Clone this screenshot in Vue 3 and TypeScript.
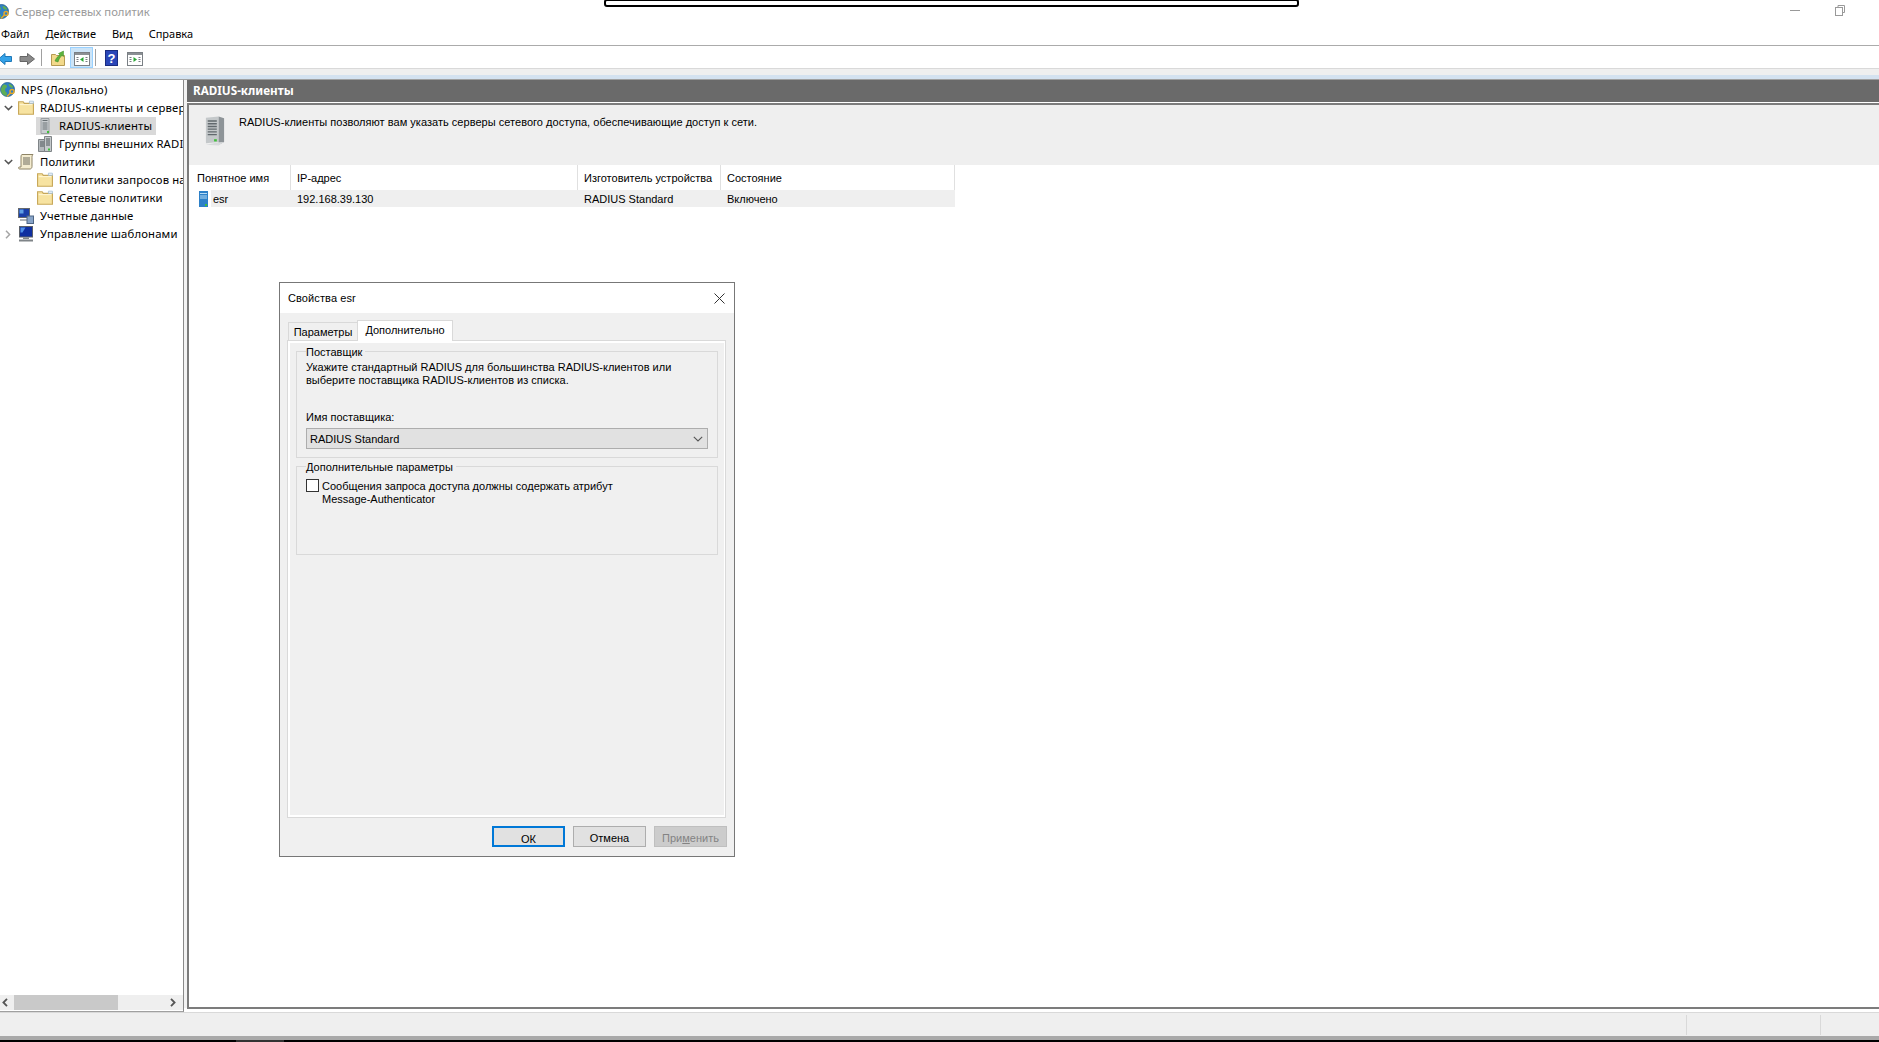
<script setup lang="ts">
interface TreeRow { label: string; icon: string; level: number; chevron?: 'down' | 'right'; selected?: boolean }
const menus: string[] = ['Файл', 'Действие', 'Вид', 'Справка']
const tree: TreeRow[] = [
  { label: 'NPS (Локально)', icon: 'globe', level: 0 },
  { label: 'RADIUS-клиенты и серверы', icon: 'folder', level: 1, chevron: 'down' },
  { label: 'RADIUS-клиенты', icon: 'server', level: 2, selected: true },
  { label: 'Группы внешних RADIUS-серверов', icon: 'servers', level: 2 },
  { label: 'Политики', icon: 'scroll', level: 1, chevron: 'down' },
  { label: 'Политики запросов на подключение', icon: 'folder', level: 2 },
  { label: 'Сетевые политики', icon: 'folder', level: 2 },
  { label: 'Учетные данные', icon: 'accounts', level: 1 },
  { label: 'Управление шаблонами', icon: 'monitor', level: 1, chevron: 'right' }
]
const columns = [
  { title: 'Понятное имя', width: 95 },
  { title: 'IP-адрес', width: 287 },
  { title: 'Изготовитель устройства', width: 143 },
  { title: 'Состояние', width: 234 }
]
</script>

<template>
  <div class="screen">
    <svg class="defs" width="0" height="0">
      <symbol id="globe" viewBox="0 0 16 16">
        <circle cx="7.5" cy="7.5" r="7" fill="#2f7fc4" stroke="#1f5b8e" stroke-width=".8" />
        <path d="M3 3c2-1 4 0 4 1.500S5 6 5 8s2 2 2 4-2 2-3 1.300C2 12 1 10 1 8s1-4 2-5zM9 2c2 0 4 2 4 3s-2 1-3 0-2-3-1-3z" fill="#5eae55" />
        <circle cx="12" cy="9.500" r="2" fill="none" stroke="#e3a92c" stroke-width="1.500" />
        <path d="M10.500 11 7 14.500" stroke="#e3a92c" stroke-width="1.600" />
      </symbol>
      <symbol id="folder" viewBox="0 0 14 14">
        <path d="M.5 1.500h4l1 1.500h8v9.500H.5z" fill="#f7e3a1" stroke="#c8a85a" />
        <path d="M1.500 4h11" stroke="#fff4cf" />
        <path d="M10 1h3.500v2H10z" fill="#e8f0f8" stroke="#9cb8d0" stroke-width=".6" />
      </symbol>
      <symbol id="server" viewBox="0 0 16 16">
        <path d="M4 .5h8v15H4z" fill="#c9cdd0" stroke="#9a9fa2" />
        <path d="M5.500 2.500h5M5.500 5h5M5.500 7h5M5.500 9h5M5.500 11h5" stroke="#687074" />
        <rect x="10" y="13" width="2" height="2" fill="#3fc03a" />
      </symbol>
      <symbol id="servers" viewBox="0 0 16 16">
        <path d="M1.500 3.500h6.500v12H1.500z" fill="#b5babd" stroke="#7f8487" />
        <path d="M7.500 .5h7v15h-7z" fill="#c6cacc" stroke="#7f8487" />
        <path d="M3 6h4M3 8h4M3 10h4M9 3h4M9 5h4M9 7h4M9 9h4" stroke="#50585c" />
        <rect x="11" y="12.500" width="2" height="2" fill="#3fc03a" />
      </symbol>
      <symbol id="scroll" viewBox="0 0 16 16">
        <path d="M4 .5h11c-1 1-1 2-1 3v9c0 1.500-1 2.500-2 2.500H1.500c-1 0-1.500-2 0-2H3V3C3 1.500 3.500 .5 4 .5z" fill="#f4ecd0" stroke="#8e8466" />
        <path d="M5 4h7M5 6h7M5 8h7M5 10h7" stroke="#6d6a5e" />
      </symbol>
      <symbol id="accounts" viewBox="0 0 16 16">
        <rect x=".5" y=".5" width="11" height="9" fill="#1a3fa8" stroke="#65696e" />
        <path d="M1.500 1.500h4v4h-4z" fill="#5fa0e6" />
        <path d="M2 11h7v2H2z" fill="#b0b4b8" />
        <rect x="9" y="8" width="6.500" height="7.500" fill="#88a4c8" stroke="#4f6684" />
      </symbol>
      <symbol id="monitor" viewBox="0 0 16 16">
        <rect x="1.500" y=".5" width="13" height="10.500" fill="#0f2fa0" stroke="#5b6068" />
        <path d="M2.500 1.500h5l-3 5h-2z" fill="#4f8fe8" />
        <path d="M5 11.500h6v1.500H5zM1 13.500h14v2H1z" fill="#7f8488" />
      </symbol>
    </svg>

    <div class="titlebar">
      <svg class="title-icon" width="16" height="16"><use href="#globe" /></svg>
      <span class="title-text">Сервер сетевых политик</span>
      <span class="win-min"></span>
      <svg class="win-restore" width="10" height="11" viewBox="0 0 10 11">
        <path d="M3 2.500V.5h6.500v7H7.500" fill="none" stroke="#999" />
        <rect x=".5" y="2.500" width="7" height="8" fill="#fff" stroke="#999" />
      </svg>
    </div>
    <div class="overlay-bar"></div>

    <nav class="menubar">
      <span v-for="m in menus" :key="m" class="menu-item">{{ m }}</span>
    </nav>

    <div class="toolbar">
      <svg class="tool back" width="14" height="14" viewBox="0 0 14 14"><path d="M7 1.500 .5 7 7 12.500V9.500h6.500v-5H7z" fill="#34a2e8" stroke="#1f78b8" /></svg>
      <svg class="tool fwd" width="16" height="14" viewBox="0 0 16 14"><path d="M8.500 1.500 15.500 7l-7 5.500V9.500H1v-5h7.500z" fill="#8a8a8a" stroke="#666" /></svg>
      <span class="tool-sep"></span>
      <svg class="tool up" width="15" height="16" viewBox="0 0 15 16"><path d="M.5 4.500h4l1 1h8v10H.5z" fill="#f2d98b" stroke="#b59a52" /><path d="M4 11c1-3 3-5 5-6L7.500 3.500l5-2.500 0 5.500L11 5.500C9 7 8 9 7 12z" fill="#5cb23c" stroke="#3b8a24" stroke-width=".5" /></svg>
      <span class="tool-active">
        <svg width="16" height="14" viewBox="0 0 16 14"><rect x=".5" y=".5" width="15" height="13" fill="#fff" stroke="#7a7f84" /><path d="M1 1h14v2H1z" fill="#8b9094" /><path d="M2.500 5.500h2M2.500 7.500h2M2.500 9.500h2M11.500 5.500h2M11.500 7.500h2M11.500 9.500h2" stroke="#7a7f84" /><path d="M9.500 5v5L6 7.500z" fill="#2aa836" /></svg>
      </span>
      <span class="tool-sep second"></span>
      <svg class="tool help" width="13" height="16" viewBox="0 0 13 16"><rect x=".5" y=".5" width="12" height="15" fill="#2a46b8" stroke="#1a2c80" /><text x="6.500" y="13" text-anchor="middle" font-size="13" font-weight="700" font-family="Liberation Sans" fill="#fff">?</text></svg>
      <svg class="tool action" width="16" height="14" viewBox="0 0 16 14"><rect x=".5" y=".5" width="15" height="13" fill="#fff" stroke="#7a7f84" /><path d="M1 1h14v2H1z" fill="#8b9094" /><path d="M2.500 5.500h2M2.500 7.500h2M2.500 9.500h2M11.500 5.500h2M11.500 7.500h2M11.500 9.500h2" stroke="#7a7f84" /><path d="M6.500 5v5L10 7.500z" fill="#2aa836" /></svg>
    </div>
    <div class="band-grey"></div>
    <div class="band-blue"></div>

    <div class="main">
      <aside class="tree-pane">
        <div class="tree-list">
          <div v-for="row in tree" :key="row.label" class="tree-row" :class="'lv' + row.level">
            <span class="chev">
              <svg v-if="row.chevron === 'down'" width="9" height="6" viewBox="0 0 9 6"><path d="M.8 1 4.500 4.600 8.200 1" fill="none" stroke="#555" stroke-width="1.500" /></svg>
              <svg v-else-if="row.chevron === 'right'" width="6" height="9" viewBox="0 0 6 9"><path d="M1 .8 4.600 4.500 1 8.200" fill="none" stroke="#a6a6a6" stroke-width="1.500" /></svg>
            </span>
            <span class="tree-item" :class="{ selected: row.selected }">
              <svg class="tree-icon" width="16" height="16"><use :href="'#' + row.icon" /></svg>
              <span class="tree-label">{{ row.label }}</span>
            </span>
          </div>
        </div>
        <div class="hscroll">
          <svg class="arrow" width="6" height="9" viewBox="0 0 6 9"><path d="M5 .8 1.400 4.500 5 8.200" fill="none" stroke="#555" stroke-width="1.800" /></svg>
          <span class="thumb"></span>
          <svg class="arrow right" width="6" height="9" viewBox="0 0 6 9"><path d="M1 .8 4.600 4.500 1 8.200" fill="none" stroke="#555" stroke-width="1.800" /></svg>
        </div>
      </aside>

      <section class="content">
        <header class="content-head">RADIUS-клиенты</header>
        <div class="content-body">
          <div class="intro">
            <svg class="intro-icon" width="20" height="32" viewBox="0 0 22 32">
              <path d="M1 1.500 15 0v28l-14 1.500z" fill="#c4c8ca" />
              <path d="M15 0l6 2v26l-6 3z" fill="#8e9498" />
              <path d="M1 31l14-2.500 6-.5-6 4z" fill="#d8dadc" />
              <path d="M3 5h10M3 8h10M3 11h10M3 14h10M3 17h10M3 20h10" stroke="#62696e" stroke-width="1.500" />
              <rect x="10" y="25" width="3" height="2.500" fill="#3fc03a" />
            </svg>
            <p class="intro-text">RADIUS-клиенты позволяют вам указать серверы сетевого доступа, обеспечивающие доступ к сети.</p>
          </div>
          <div class="list">
            <div class="list-head">
              <span v-for="c in columns" :key="c.title" class="col-head" :style="{ width: c.width + 'px' }">{{ c.title }}</span>
            </div>
            <div class="list-row">
              <span class="cell first" :style="{ width: columns[0].width + 'px' }">
                <svg class="row-icon" width="9" height="16" viewBox="0 0 9 16"><rect width="9" height="16" fill="#2d80c8" /><path d="M1 2.500h7M1 5h7M1 7h7" stroke="#b8dcf4" /><rect x="6" y="13" width="2" height="2" fill="#3fc03a" /></svg>
                <span class="esr">esr</span>
              </span>
              <span class="cell" :style="{ width: columns[1].width + 'px' }">192.168.39.130</span>
              <span class="cell" :style="{ width: columns[2].width + 'px' }">RADIUS Standard</span>
              <span class="cell" :style="{ width: columns[3].width + 'px' }">Включено</span>
            </div>
          </div>
        </div>
      </section>
    </div>

    <footer class="statusbar">
      <span class="status-cell grow"></span>
      <span class="status-cell mid"></span>
      <span class="status-cell end"></span>
    </footer>
    <div class="task-edge"></div>
    <div class="task-black"><span class="task-tab"></span></div>

    <div class="dialog">
      <div class="dialog-title">
        <span>Свойства esr</span>
        <svg width="11" height="11" viewBox="0 0 11 11"><path d="M.5.500l10 10M10.500.500l-10 10" stroke="#333" /></svg>
      </div>
      <div class="dialog-body">
        <div class="tabs">
          <span class="tab">Параметры</span>
          <span class="tab active">Дополнительно</span>
        </div>
        <div class="tab-panel">
          <div class="tab-inner">
            <fieldset class="group vendor">
              <legend>Поставщик</legend>
              <p class="group-text">Укажите стандартный RADIUS для большинства RADIUS-клиентов или<br />выберите поставщика RADIUS-клиентов из списка.</p>
              <label class="vendor-label">Имя поставщика:</label>
              <div class="select">
                <span>RADIUS Standard</span>
                <svg width="10" height="6" viewBox="0 0 10 6"><path d="M.8 .8 5 5 9.200 .8" fill="none" stroke="#555" stroke-width="1.100" /></svg>
              </div>
            </fieldset>
            <fieldset class="group extra">
              <legend>Дополнительные параметры</legend>
              <div class="check-row">
                <span class="check"></span>
                <span class="check-text">Сообщения запроса доступа должны содержать атрибут<br />Message-Authenticator</span>
              </div>
            </fieldset>
          </div>
        </div>
        <div class="buttons">
          <button class="btn default">ОК</button>
          <button class="btn">Отмена</button>
          <button class="btn disabled">При<u>м</u>енить</button>
        </div>
      </div>
    </div>
  </div>
</template>

<style>
html, body { margin: 0; background: #fff; }
</style>

<style scoped>
.screen {
  position: relative;
  width: 1879px;
  height: 1042px;
  overflow: hidden;
  background: #fff;
  display: flex;
  flex-direction: column;
  font-family: "Noto Sans", "Liberation Sans", sans-serif;
  font-size: 11.3px;
  color: #000;
}
.defs { position: absolute; }
.titlebar {
  height: 23px;
  flex: none;
  display: flex;
  align-items: center;
  position: relative;
  overflow: hidden;
}
.title-icon { margin-left: -6px; margin-right: 5px; flex: none; }
.title-text { color: #9a9a9a; }
.win-min { position: absolute; left: 1790px; top: 10px; width: 10px; height: 1px; background: #999; }
.win-restore { position: absolute; left: 1835px; top: 5px; }
.overlay-bar {
  position: absolute;
  left: 604px;
  top: -1px;
  width: 695px;
  height: 8px;
  box-sizing: border-box;
  border: 2px solid #000;
  border-radius: 3px;
  background: #fff;
}
.menubar {
  height: 22px;
  flex: none;
  display: flex;
  align-items: center;
  padding-left: 1px;
  gap: 16px;
  font-size: 11px;
  border-bottom: 1px solid #ababab;
  box-sizing: content-box;
}
.menu-item { line-height: 22px; }
.toolbar {
  flex: none;
  display: flex;
  align-items: flex-end;
  border-bottom: 1px solid #d9d9d9;
  padding-bottom: 2px;
  box-sizing: content-box;
  height: 20px;
}
.tool { flex: none; }
.back { margin-left: -2px; }
.fwd { margin-left: 7px; }
.tool-sep { width: 1px; height: 17px; background: #a0a0a0; margin-left: 6px; flex: none; }
.up { margin-left: 9px; }
.tool-active {
  width: 23px;
  height: 21px;
  margin-left: 4px;
  margin-bottom: -2px;
  background: #cce4f7;
  border: 1px solid #99d1ff;
  box-sizing: border-box;
  display: flex;
  align-items: center;
  justify-content: center;
  padding-top: 2px;
  flex: none;
}
.tool-sep.second { margin-left: 2px; }
.help { margin-left: 9px; }
.action { margin-left: 9px; }
.band-grey { height: 6px; flex: none; background: #efefef; }
.band-blue { height: 4px; flex: none; background: #d4e2f0; border-bottom: 1px solid #a0a0a0; box-sizing: content-box; }

.main {
  height: 928px;
  flex: none;
  display: flex;
  background: #f3f3f3;
}
.tree-pane {
  width: 183px;
  flex: none;
  height: 931px;
  background: #fff;
  border-right: 1px solid #8a8a8a;
  border-bottom: 1px solid #a0a0a0;
  box-sizing: content-box;
  display: flex;
  flex-direction: column;
}
.tree-list { flex: 1; overflow: hidden; padding-top: 1px; }
.tree-row {
  height: 18px;
  display: flex;
  align-items: center;
  white-space: nowrap;
  letter-spacing: .15px;
  overflow: hidden;
}
.chev { width: 16px; flex: none; display: flex; justify-content: center; align-items: center; }
.tree-item { display: flex; align-items: center; height: 18px; flex: none; }
.tree-icon { flex: none; }
.tree-label { margin-left: 6px; line-height: 18px; }
.lv0 .chev { width: 0; }
.lv0 .tree-label { margin-left: 5px; }
.lv1 .tree-item { padding-left: 2px; }
.lv2 .tree-item { margin-left: 20px; padding-left: 1px; }
.tree-item.selected { background: #d9d9d9; padding-right: 4px; }
.hscroll {
  height: 15px;
  flex: none;
  background: #efefef;
  display: flex;
  align-items: center;
  position: relative;
  margin-bottom: 1px;
}
.arrow { margin-left: 2px; flex: none; }
.arrow.right { margin-left: auto; margin-right: 7px; }
.thumb { position: absolute; left: 14px; top: 0; bottom: 0; width: 104px; background: #c9c9c9; }

.content {
  margin-left: 3px;
  flex: 1;
  display: flex;
  flex-direction: column;
  min-width: 0;
}
.content-head {
  height: 23px;
  flex: none;
  background: #6a6a6a;
  color: #fff;
  font-weight: 700;
  font-size: 11.7px;
  padding-left: 6px;
  line-height: 21px;
  border-bottom: 1px solid #fff;
  box-sizing: border-box;
}
.content-body {
  flex: 1;
  border-top: 2px solid #7c7c7c;
  border-left: 2px solid #7c7c7c;
  border-bottom: 2px solid #7c7c7c;
  background: #fff;
  display: flex;
  flex-direction: column;
  margin-bottom: -1px;
}
.intro {
  height: 60px;
  flex: none;
  background: #efefef;
  display: flex;
  align-items: flex-start;
}
.intro-icon { margin: 10px 0 0 16px; flex: none; }
.intro-text { margin: 9px 0 0 14px; font-family: "Liberation Sans", sans-serif; font-size: 11px; line-height: 16px; letter-spacing: .03px; }
.list { width: 759px; margin-left: 7px; font-family: "Liberation Sans", sans-serif; font-size: 11px; }
.list-head { height: 25px; display: flex; background: #fff; }
.col-head {
  flex: none;
  box-sizing: border-box;
  padding: 0 0 0 1px;
  border-right: 1px solid #e0e0e0;
  line-height: 26px;
  white-space: nowrap;
}
.col-head:nth-child(n + 2) { padding-left: 6px; }
.list-row { height: 17px; display: flex; background: linear-gradient(#efefef, #efefef) 15px 0 no-repeat; line-height: 18px; }
.cell { flex: none; box-sizing: border-box; padding-left: 6px; }
.cell.first { display: flex; align-items: center; padding-left: 3px; }
.esr { margin-left: 5px; }

.statusbar {
  position: absolute;
  left: 0;
  right: 0;
  top: 1012px;
  height: 24px;
  box-sizing: border-box;
  border-top: 1px solid #d9d9d9;
  background: #efefef;
  display: flex;
}
.status-cell { margin: 2px 0 1px; }
.status-cell.grow { width: 1686px; }
.status-cell.mid { width: 133px; border-left: 1px solid #d9d9d9; }
.status-cell.end { flex: 1; border-left: 1px solid #d9d9d9; }
.task-edge { position: absolute; left: 0; right: 0; top: 1036px; height: 4px; background: #a9a9a9; }
.task-black { position: absolute; left: 0; right: 0; top: 1040px; height: 2px; background: #000; }
.task-tab { position: absolute; left: 236px; top: 0; width: 48px; height: 2px; background: #333; }

.dialog {
  position: absolute;
  left: 279px;
  top: 282px;
  width: 456px;
  height: 575px;
  box-sizing: border-box;
  border: 1px solid #777;
  background: #f0f0f0;
  display: flex;
  flex-direction: column;
  font-family: "Liberation Sans", sans-serif;
  font-size: 11px;
}
.dialog-title {
  height: 30px;
  flex: none;
  background: #fff;
  display: flex;
  align-items: center;
  justify-content: space-between;
  padding: 0 9px 0 8px;
  box-sizing: border-box;
  letter-spacing: .1px;
}
.dialog-body { flex: 1; display: flex; flex-direction: column; padding: 7px 0 0 7px; min-height: 0; }
.tabs { height: 20px; flex: none; display: flex; align-items: flex-end; padding-left: 1px; position: relative; z-index: 1; }
.tab {
  height: 18px;
  box-sizing: border-box;
  width: 69px;
  text-align: center;
  line-height: 18px;
  border: 1px solid #d9d9d9;
  border-bottom: none;
  border-right: none;
}
.tab.active {
  height: 21px;
  width: 96px;
  background: #fff;
  border-right: 1px solid #d9d9d9;
  line-height: 19px;
  margin-bottom: -1px;
}
.tab-panel {
  height: 478px;
  flex: none;
  width: 439px;
  box-sizing: border-box;
  border: 1px solid #d9d9d9;
  background: #fff;
  padding: 2px 1px 2px 2px;
}
.tab-inner {
  height: 100%;
  background: #f0f0f0;
  padding: 0 6px;
  box-sizing: border-box;
}
.group {
  margin: 0;
  padding: 0 9px;
  border: 1px solid #d9d9d9;
  box-sizing: border-box;
  min-width: 0;
}
.group legend {
  padding: 2px 3px 0 0;
  margin-left: 0;
  line-height: 14px;
}
.vendor { height: 115px; }
.extra { height: 97px; }
.group-text { margin: 0; line-height: 13px; padding-top: 2px; }
.vendor-label { display: block; margin-top: 24px; line-height: 13px; }
.select {
  margin-top: 4px;
  height: 21px;
  box-sizing: border-box;
  width: 402px;
  background: #e1e1e1;
  border: 1px solid #adadad;
  display: flex;
  align-items: center;
  justify-content: space-between;
  padding: 0 4px 0 3px;
}
.check-row { display: flex; align-items: flex-start; margin-top: 5px; }
.check {
  width: 13px;
  height: 13px;
  box-sizing: border-box;
  border: 1px solid #333;
  background: #fff;
  flex: none;
}
.check-text { margin: 1px 0 0 3px; line-height: 13px; }
.buttons { flex: none; display: flex; justify-content: flex-end; gap: 8px; margin-top: 8px; width: 440px; }
.btn {
  width: 73px;
  height: 21px;
  box-sizing: border-box;
  border: 1px solid #adadad;
  background: #e1e1e1;
  font: inherit;
  color: #000;
  padding: 2px 0 0;
  line-height: 18px;
}
.btn.default { border: 2px solid #0078d7; }
.btn.disabled { background: #ccc; border-color: #bfbfbf; color: #838383; }
</style>
